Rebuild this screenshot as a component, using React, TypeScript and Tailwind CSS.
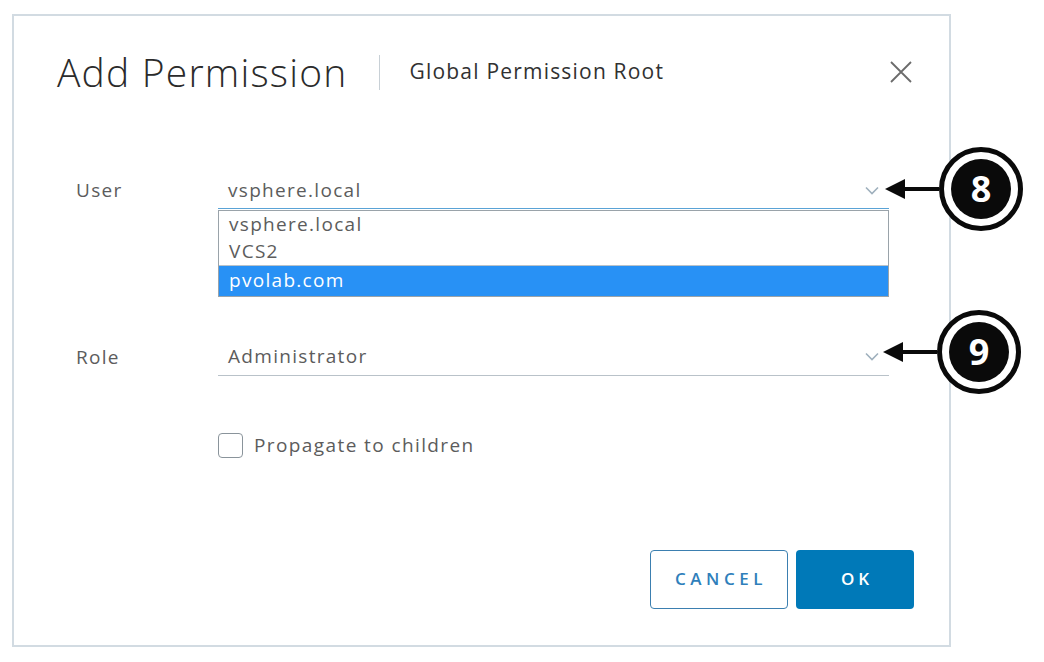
import React from "react";

const font = { fontFamily: '"Open Sans", "Liberation Sans", sans-serif' };

function Chevron() {
  return (
    <svg width="14" height="9" viewBox="0 0 14 9" fill="none">
      <path d="M1 1.5 L7 7.5 L13 1.5" stroke="#9fb0bd" strokeWidth="1.6" />
    </svg>
  );
}

function Callout({ n }: { n: string }) {
  return (
    <div className="flex items-center">
      <svg width="54" height="22" viewBox="0 0 54 22">
        <polygon points="0,11 20,1 20,21" fill="#0a0a0a" />
        <rect x="18" y="9" width="36" height="4" fill="#0a0a0a" />
      </svg>
      <div className="w-[84px] h-[84px] rounded-full border-[5px] border-[#0a0a0a] bg-white flex items-center justify-center">
        <div
          className="w-[60px] h-[60px] rounded-full bg-[#0a0a0a] text-white flex items-center justify-center text-[36px] font-bold leading-none"
          style={{ fontFamily: '"Open Sans", sans-serif' }}
        >
          {n}
        </div>
      </div>
    </div>
  );
}

export default function App() {
  return (
    <div className="relative w-[1044px] h-[662px] bg-white overflow-hidden" style={font}>
      <div className="ml-[12px] pt-[14px]">
        <div className="w-[939px] h-[633px] border-2 border-[#d2dbe2] flex flex-col">
          {/* header */}
          <div className="h-[112px] flex items-center pl-[43px] pr-[36px]">
            <div className="text-[39px] font-light text-[#2b2b2b] tracking-[1.2px]">Add Permission</div>
            <div className="w-px h-[35px] bg-[#c8d0d6] ml-[31px] mr-[30px]" />
            <div className="text-[21px] font-medium text-[#313131] tracking-[1.2px]">Global Permission Root</div>
            <div className="flex-1" />
            <svg width="24" height="24" viewBox="0 0 24 24">
              <path d="M2 2 L22 22 M22 2 L2 22" stroke="#6b6b6b" strokeWidth="1.8" />
            </svg>
          </div>

          {/* User row */}
          <div className="mt-[44px] pl-[62px] flex tracking-[1.3px]">
            <div className="w-[142px] h-[36px] flex items-center text-[19px] text-[#5c5c5c]">User</div>
            <div className="relative w-[671px]">
              <div className="h-[37px] border-b border-[#5aa3d6] flex items-center justify-between pl-[10px] pr-[10px] text-[19px] text-[#5c5c5c]">
                <span>vsphere.local</span>
                <Chevron />
              </div>
              <div className="h-[88px] w-[287px] border-b border-[#b9c2c9]" />
              <div className="absolute left-0 top-[38px] w-[671px] h-[87px] border border-[#9aa3aa] bg-white flex flex-col text-[19px] leading-none">
                <div className="h-[27px] flex items-center pl-[10px] text-[#5c5c5c]">vsphere.local</div>
                <div className="h-[28px] flex items-center pl-[10px] text-[#5c5c5c] border-b border-[#b9c2c9]">VCS2</div>
                <div className="flex-1 flex items-center pl-[10px] pb-[2px] bg-[#2891f5] text-white">pvolab.com</div>
              </div>
            </div>
          </div>

          {/* Role row */}
          <div className="mt-[41px] pl-[62px] flex tracking-[1.3px]">
            <div className="w-[142px] h-[38px] flex items-center text-[19px] text-[#5c5c5c]">Role</div>
            <div className="w-[671px] h-[38px] border-b border-[#b9c2c9] flex items-center justify-between pl-[10px] pr-[10px] text-[19px] text-[#5c5c5c]">
              <span>Administrator</span>
              <Chevron />
            </div>
          </div>

          {/* checkbox */}
          <div className="mt-[55px] pl-[204px] flex items-center gap-[11px]">
            <div className="w-[25px] h-[25px] rounded-[4px] border border-[#8a949b] bg-white" />
            <div className="text-[19px] text-[#5c5c5c] tracking-[1.4px]">Propagate to children</div>
          </div>

          {/* buttons */}
          <div className="mt-[90px] flex justify-end gap-[8px] pr-[35px]">
            <button className="w-[138px] h-[59px] rounded-[4px] border border-[#3b7fb0] bg-white text-[#2f7fbb] text-[17px] font-semibold tracking-[4.5px] pl-[4px]">
              CANCEL
            </button>
            <button className="w-[118px] h-[59px] rounded-[4px] bg-[#0079b8] text-white text-[17px] font-semibold tracking-[4px] pl-[4px]">
              OK
            </button>
          </div>
        </div>
      </div>

      <div className="absolute left-[885px] top-[147px]">
        <Callout n="8" />
      </div>
      <div className="absolute left-[883px] top-[310px]">
        <Callout n="9" />
      </div>
    </div>
  );
}
